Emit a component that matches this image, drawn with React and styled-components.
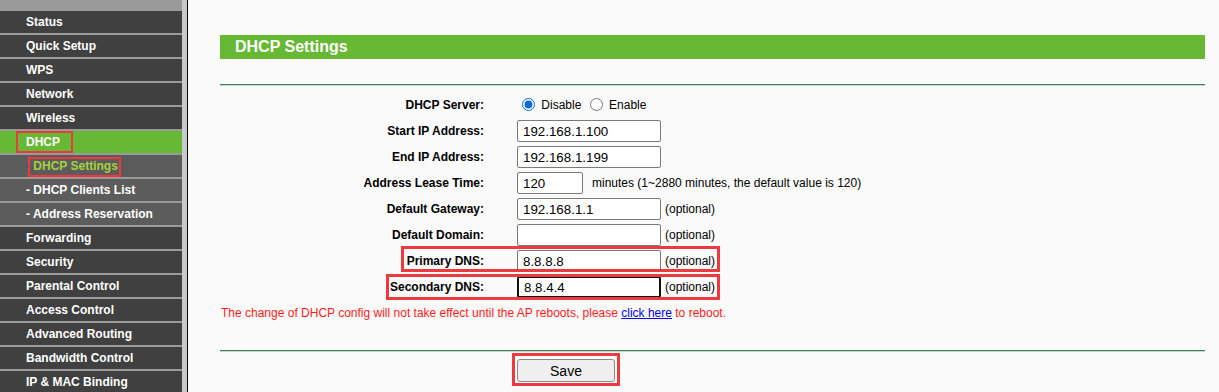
import React from 'react'
import styled, { createGlobalStyle } from 'styled-components'

const GlobalStyle = createGlobalStyle`
  html, body {
    margin: 0;
    padding: 0;
    height: 100%;
    overflow: hidden;
  }
  body {
    font-family: "Liberation Sans", Arial, sans-serif;
    font-size: 12px;
    color: #000;
  }
  #root {
    height: 100%;
  }
`

const Page = styled.div`
  display: flex;
  height: 100%;
`

const Sidebar = styled.nav`
  width: 182px;
  flex: none;
  background: #9a9a9a;
  border-right: 5px solid #c9c9c9;
  padding-top: 11px;
  display: flex;
  flex-direction: column;
  gap: 2px;
  overflow: hidden;
`

const MenuItem = styled.div`
  position: relative;
  flex: none;
  height: 22px;
  line-height: 22px;
  padding-left: 26px;
  font-weight: bold;
  font-size: 12px;
  white-space: nowrap;
  color: #fff;
  background: ${p => (p.$active ? '#67b834' : p.$sub ? '#5c5c5c' : '#404040')};
`

const Dash = styled.span`
  color: ${p => (p.$dim ? '#444' : '#fff')};
`

const CurrentText = styled.span`
  color: #a5d23c;
`

const Callout = styled.span`
  position: absolute;
  left: ${p => p.$left}px;
  top: ${p => p.$top}px;
  width: ${p => p.$w}px;
  height: ${p => p.$h}px;
  box-sizing: border-box;
  border: ${p => p.$b || 2}px solid #ee3a3f;
  pointer-events: none;
`

const Main = styled.main`
  flex: 1;
  background: #fafafa;
  border-left: 1px solid #0a0a0a;
  padding: 35px 14px 0 32px;
`

const TitleBar = styled.div`
  height: 24px;
  line-height: 24px;
  background: #67b834;
  color: #fff;
  font-weight: bold;
  font-size: 16px;
  padding-left: 15px;
`

const Rule = styled.div`
  height: 1px;
  background: #3f7f5e;
  border-bottom: 1px solid #c5d6cc;
  margin-top: ${p => p.$top}px;
`

const Form = styled.div`
  display: grid;
  grid-template-columns: 264px 1fr;
  grid-auto-rows: 26px;
  column-gap: 33px;
  align-items: center;
  padding-top: 6px;
`

const Row = styled.div`
  display: contents;
`

const Label = styled.div`
  position: relative;
  text-align: right;
  font-weight: bold;
  font-size: 12px;
  height: 26px;
  line-height: 26px;
`

const Field = styled.div`
  display: flex;
  align-items: center;
  gap: 4px;
  font-size: 12px;
`

const Choice = styled.label`
  font-size: 12px;
  white-space: nowrap;
  line-height: 26px;
`

const Radio = styled.input`
  width: 13px;
  height: 13px;
  margin: 3px 3px 0 5px;
  vertical-align: -2px;
  accent-color: #0b6bd8;
`

const TextBox = styled.input`
  box-sizing: border-box;
  width: ${p => p.$w}px;
  height: 22px;
  padding: 1px 5px;
  border: ${p => (p.$focused ? '2px solid #111' : '1px solid #7a7a7a')};
  border-radius: 2px;
  background: #fff;
  font-family: "Liberation Sans", Arial, sans-serif;
  font-size: 13.333px;
  color: #000;
  outline: none;
`

const Hint = styled.span`
  white-space: nowrap;
  margin-left: ${p => p.$gap || 0}px;
`

const Notice = styled.div`
  grid-column: 1 / -1;
  color: #ff1a1a;
  font-size: 12px;
  padding-left: 1px;
  line-height: 26px;

  a {
    color: #0000ee;
    text-decoration: underline;
  }
`

const Actions = styled.div`
  padding: 1px 0 0 292px;
`

const SaveFrame = styled.span`
  display: inline-block;
  border: 3px solid #ee3a3f;
  padding: 3px 2px 1px 2px;
`

const SaveButton = styled.button`
  display: block;
  width: 98px;
  height: 23px;
  background: #efefef;
  border: 1px solid #8a8a8a;
  border-radius: 3px;
  font-family: "Liberation Sans", Arial, sans-serif;
  font-size: 14px;
  color: #000;
  padding: 0;
`

const menu = [
  { label: 'Status' },
  { label: 'Quick Setup' },
  { label: 'WPS' },
  { label: 'Network' },
  { label: 'Wireless' },
  { label: 'DHCP', active: true, mark: { left: 16, top: 0, w: 57, h: 22 } },
  { label: 'DHCP Settings', sub: true, current: true, mark: { left: 28, top: 2, w: 93, h: 20 } },
  { label: 'DHCP Clients List', sub: true },
  { label: 'Address Reservation', sub: true },
  { label: 'Forwarding' },
  { label: 'Security' },
  { label: 'Parental Control' },
  { label: 'Access Control' },
  { label: 'Advanced Routing' },
  { label: 'Bandwidth Control' },
  { label: 'IP & MAC Binding' },
]

const fields = [
  { label: 'Start IP Address:', value: '192.168.1.100' },
  { label: 'End IP Address:', value: '192.168.1.199' },
  { label: 'Address Lease Time:', value: '120', w: 66, hint: 'minutes (1~2880 minutes, the default value is 120)', gap: 5 },
  { label: 'Default Gateway:', value: '192.168.1.1', hint: '(optional)' },
  { label: 'Default Domain:', value: '', hint: '(optional)' },
  { label: 'Primary DNS:', value: '8.8.8.8', hint: '(optional)', mark: { left: 181, top: -2, w: 319, h: 26 } },
  { label: 'Secondary DNS:', value: '8.8.4.4', hint: '(optional)', focused: true, mark: { left: 166, top: 0, w: 334, h: 26 } },
]

export default function App() {
  return (
    <>
      <GlobalStyle />
      <Page>
        <Sidebar>
          {menu.map(item => (
            <MenuItem key={item.label} $active={item.active} $sub={item.sub}>
              {item.sub && <Dash $dim={item.current}>- </Dash>}
              {item.current ? <CurrentText>{item.label}</CurrentText> : item.label}
              {item.mark && (
                <Callout $left={item.mark.left} $top={item.mark.top} $w={item.mark.w} $h={item.mark.h} />
              )}
            </MenuItem>
          ))}
        </Sidebar>

        <Main>
          <TitleBar>DHCP Settings</TitleBar>
          <Rule $top={25} />

          <Form>
            <Row>
              <Label>DHCP Server:</Label>
              <Choice>
                <Radio type="radio" name="dhcp" defaultChecked />
                {' '}Disable{' '}
                <Radio type="radio" name="dhcp" />
                {' '}Enable
              </Choice>
            </Row>

            {fields.map(f => (
              <Row key={f.label}>
                <Label>
                  {f.label}
                  {f.mark && <Callout $left={f.mark.left} $top={f.mark.top} $w={f.mark.w} $h={f.mark.h} $b={3} />}
                </Label>
                <Field>
                  <TextBox type="text" defaultValue={f.value} $w={f.w || 144} $focused={f.focused} />
                  {f.hint && <Hint $gap={f.gap}>{f.hint}</Hint>}
                </Field>
              </Row>
            ))}

            <Notice>
              The change of DHCP config will not take effect until the AP reboots, please{' '}
              <a href="#reboot">click here</a> to reboot.
            </Notice>
          </Form>

          <Rule $top={24} />

          <Actions>
            <SaveFrame>
              <SaveButton type="button">Save</SaveButton>
            </SaveFrame>
          </Actions>
        </Main>
      </Page>
    </>
  )
}
